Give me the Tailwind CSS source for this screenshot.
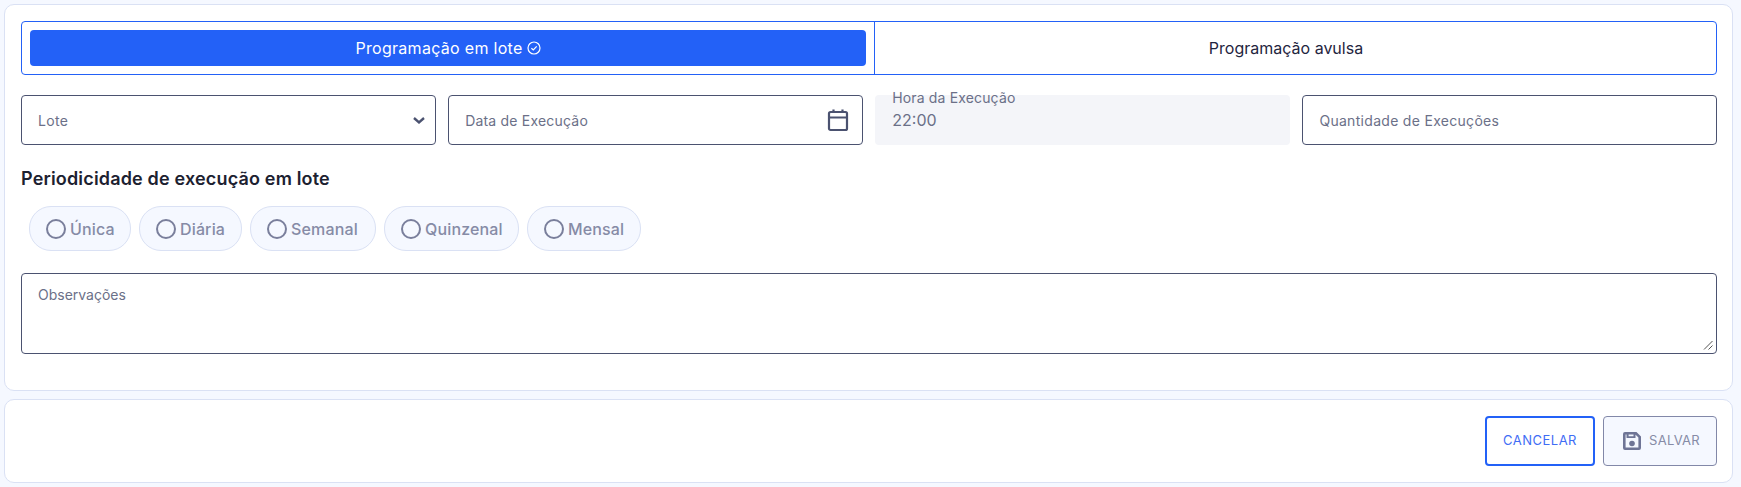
<!DOCTYPE html>
<html lang="pt-BR">
<head>
<meta charset="utf-8">
<script src="https://cdn.jsdelivr.net/npm/@tailwindcss/browser@4"></script>
</head>
<body class="bg-[#f5f8ff] font-['Inter',sans-serif]">
<div class="w-[1741px] h-[487px] overflow-hidden pl-[4px] pr-[8px] pt-[4px] flex flex-col gap-[8px]">
  <section class="h-[387px] shrink-0 bg-white border border-[#dae1f4] rounded-[10px] pl-[16px] pr-[15px] pt-[16px]">
    <div class="grid grid-cols-[853px_1fr] h-[54px] border border-[#2361f7] rounded-[4px]">
      <div class="p-[8px] border-r border-[#2361f7]">
        <button class="w-full h-[36px] bg-[#2361f7] rounded-[4px] text-white text-[16px] tracking-[0.3px] flex items-center justify-center gap-[4px]">
          Programação em lote
          <svg class="w-[14px] h-[14px]" viewBox="0 0 14 14" fill="none" stroke="currentColor" stroke-width="1.2"><circle cx="7" cy="7" r="6"/><path d="M4.4 7.2 6.3 9 9.7 5.3"/></svg>
        </button>
      </div>
      <button class="text-[#1f2540] text-[16px] pr-[19px]">Programação avulsa</button>
    </div>
    <div class="grid grid-cols-4 gap-[12.5px] mt-[20px]">
      <div class="h-[50px] border border-[#4b5270] rounded-[4px] pl-[16px] pr-[8px] flex items-center justify-between">
        <span class="text-[14px] tracking-[0.3px] text-[#6b7088]">Lote</span>
        <svg class="w-[16px] h-[16px] text-[#4b5270]" viewBox="0 0 16 16" fill="none" stroke="currentColor" stroke-width="2.4"><path d="M3 6 8 10.3 13 6"/></svg>
      </div>
      <div class="h-[50px] border border-[#4b5270] rounded-[4px] pl-[16px] pr-[13px] flex items-center justify-between">
        <span class="text-[14px] tracking-[0.2px] text-[#6b7088]">Data de Execução</span>
        <svg class="w-[22px] h-[24px] text-[#4b5270]" viewBox="0 0 22 24" fill="none" stroke="currentColor" stroke-width="2.2"><rect x="2" y="4" width="18" height="18" rx="1.5"/><path d="M2 9.5h18M6.5 1.5V4M15.5 1.5V4"/></svg>
      </div>
      <div class="relative h-[50px] bg-[#f4f5f9] rounded-[4px] px-[17px] flex items-center">
        <span class="absolute left-[17px] top-[-8px] text-[14px] tracking-[0.15px] text-[#6b7088]">Hora da Execução</span>
        <span class="text-[16px] text-[#6b7088]">22:00</span>
      </div>
      <div class="h-[50px] border border-[#4b5270] rounded-[4px] px-[16px] flex items-center">
        <span class="text-[14px] tracking-[0.3px] text-[#6b7088]">Quantidade de Execuções</span>
      </div>
    </div>
    <h2 class="mt-[24px] text-[18px] leading-[20px] font-semibold text-[#1c2130] tracking-[0.17px]">Periodicidade de execução em lote</h2>
    <div class="flex gap-[8px] mt-[17px] ml-[8px]">
      <label class="h-[45px] w-[102px] bg-[#f5f8ff] border border-[#dae1f4] rounded-[22px] flex items-center gap-[4px] pl-[16px] text-[16px] tracking-[0.15px] font-medium text-[#868ba6]"><span class="w-[20px] h-[20px] rounded-full border-2 border-[#7a7f9c]"></span>Única</label>
      <label class="h-[45px] w-[103px] bg-[#f5f8ff] border border-[#dae1f4] rounded-[22px] flex items-center gap-[4px] pl-[16px] text-[16px] tracking-[0.15px] font-medium text-[#868ba6]"><span class="w-[20px] h-[20px] rounded-full border-2 border-[#7a7f9c]"></span>Diária</label>
      <label class="h-[45px] w-[126px] bg-[#f5f8ff] border border-[#dae1f4] rounded-[22px] flex items-center gap-[4px] pl-[16px] text-[16px] tracking-[0.15px] font-medium text-[#868ba6]"><span class="w-[20px] h-[20px] rounded-full border-2 border-[#7a7f9c]"></span>Semanal</label>
      <label class="h-[45px] w-[135px] bg-[#f5f8ff] border border-[#dae1f4] rounded-[22px] flex items-center gap-[4px] pl-[16px] text-[16px] tracking-[0.15px] font-medium text-[#868ba6]"><span class="w-[20px] h-[20px] rounded-full border-2 border-[#7a7f9c]"></span>Quinzenal</label>
      <label class="h-[45px] w-[114px] bg-[#f5f8ff] border border-[#dae1f4] rounded-[22px] flex items-center gap-[4px] pl-[16px] text-[16px] tracking-[0.15px] font-medium text-[#868ba6]"><span class="w-[20px] h-[20px] rounded-full border-2 border-[#7a7f9c]"></span>Mensal</label>
    </div>
    <div class="relative h-[81px] mt-[22px] border border-[#4b5270] rounded-[4px] px-[16px] pt-[11px]">
      <span class="text-[14px] leading-[20px] text-[#6b7088] block">Observações</span>
      <svg class="absolute right-[3px] bottom-[3px] w-[10px] h-[10px] text-[#555]" viewBox="0 0 10 10" fill="none" stroke="currentColor" stroke-width="1"><path d="M9.5 1 1 9.5M9.5 5.5 5.5 9.5"/></svg>
    </div>
  </section>
  <section class="h-[84px] shrink-0 bg-white border border-[#dae1f4] rounded-[10px] pr-[15px] flex items-center justify-end gap-[8px]">
    <button class="h-[50px] w-[110px] border-2 border-[#2361f7] rounded-[4px] text-[13px] tracking-[0.5px] text-[#3f6df5]">CANCELAR</button>
    <button class="h-[50px] w-[114px] bg-[#f5f8ff] border border-[#8288a8] rounded-[4px] text-[13px] tracking-[0.3px] text-[#868ba6] flex items-center pl-[19px] gap-[8px]">
      <svg class="w-[18px] h-[18px] text-[#6f7596]" viewBox="0 0 18 18" fill="currentColor"><path fill-rule="evenodd" d="M2 0h11.5L18 4.5V16a2 2 0 0 1-2 2H2a2 2 0 0 1-2-2V2a2 2 0 0 1 2-2Zm.6 2.6v12.8h12.8V5.6l-3-3H12.500v3.400H3.500V2.600H2.600Zm3 0v1.600h4.900V2.600H5.600Z"/><circle cx="9" cy="11.500" r="2.800"/></svg>
      SALVAR
    </button>
  </section>
</div>
</body>
</html>
